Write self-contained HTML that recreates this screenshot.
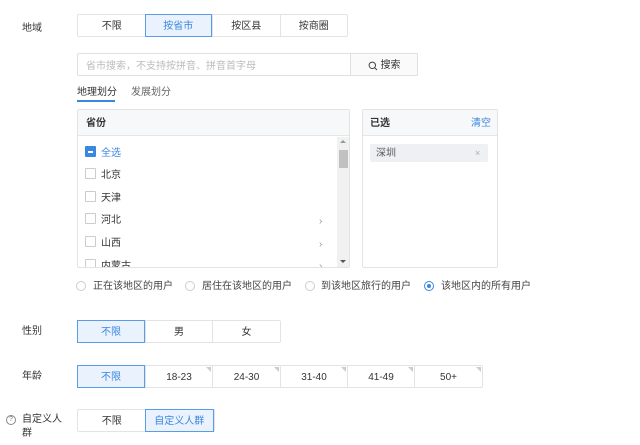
<!DOCTYPE html>
<html><head><meta charset="utf-8"><style>
*{box-sizing:border-box;margin:0;padding:0}
body{width:640px;height:445px;background:#fff;font-family:"Liberation Sans","Noto Sans CJK SC",sans-serif;font-size:10px;line-height:1.2;color:#333;position:relative;overflow:hidden}
.a{position:absolute}
.lbl{position:absolute;left:22px;font-size:10px;color:#333}
.seg{position:absolute;display:flex;border:1px solid #e3e3e3;border-radius:2px}
.seg div{height:100%;display:block;text-align:center;line-height:21px;padding-top:1px;border-left:1px solid #e3e3e3;color:#333;position:relative;overflow:hidden}
.seg div:first-child{border-left:none}
.seg div.on{background:#eaf3fd;border:1px solid #5a9ce8;color:#3b86e0;margin:-1px 0 -1px -1px;height:calc(100% + 2px)}
.seg div.on:first-child{margin-left:-1px}
.tri:after{content:"";position:absolute;right:1px;top:1px;border-top:5px solid #ccc;border-left:5px solid transparent}
.cb{position:absolute;left:85px;width:11px;height:11px;border:1px solid #ccc;border-radius:1px;background:#fff}
.row{position:absolute;left:101px;font-size:10px;color:#333}
.arr{position:absolute;left:319px;color:#999;font-size:10px}
.rad{position:absolute;width:10px;height:10px;border:1px solid #ccc;border-radius:50%;top:281px}
.rt{position:absolute;top:280px;font-size:10px;color:#444}
</style></head><body>
<div class="lbl" style="top:23px">地域</div>
<div class="seg" style="left:77px;top:14px;width:271px;height:23px">
<div style="width:68px">不限</div><div class="on" style="width:68px">按省市</div><div style="width:68px">按区县</div><div style="width:68px">按商圈</div></div>

<div class="a" style="left:77px;top:53px;width:341px;height:23px;border:1px solid #e0e0e0;border-radius:2px"></div>
<div class="a" style="left:86px;top:61px;color:#bbb;font-size:10px">省市搜索，不支持按拼音、拼音首字母</div>
<div class="a" style="left:350px;top:53px;width:68px;height:23px;border:1px solid #e0e0e0;border-radius:0 2px 2px 0;background:#fafafa;display:flex;align-items:center;justify-content:center;font-size:10px;color:#333;padding-top:2px"><svg width="10" height="10" viewBox="0 0 10 10" style="margin-right:3px"><circle cx="4.3" cy="4.3" r="3.2" fill="none" stroke="#444" stroke-width="1"/><path d="M6.6 6.6L9 9" stroke="#444" stroke-width="1"/></svg><span style="padding-top:1px">搜索</span></div>

<div class="a" style="left:77px;top:87px;font-size:10px;color:#333">地理划分</div>
<div class="a" style="left:77px;top:100px;width:38px;height:2px;background:#3b86e0"></div>
<div class="a" style="left:131px;top:87px;font-size:10px;color:#666">发展划分</div>

<div class="a" style="left:77px;top:109px;width:273px;height:159px;border:1px solid #e3e3e3;border-radius:2px"></div>
<div class="a" style="left:78px;top:110px;width:271px;height:26px;background:#f7f8fa;border-bottom:1px solid #e6e6e6"></div>
<div class="a" style="left:86px;top:118px;font-size:10px;color:#333;font-weight:bold">省份</div>
<div class="cb" style="top:146px;background:#3b86e0;border-color:#3b86e0"><div style="position:absolute;left:2px;top:4px;width:5px;height:1.5px;background:#fff"></div></div>
<div class="row" style="top:148px;color:#3b86e0">全选</div>
<div class="cb" style="top:168px"></div><div class="row" style="top:170px">北京</div>
<div class="cb" style="top:191px"></div><div class="row" style="top:193px">天津</div>
<div class="cb" style="top:213px"></div><div class="row" style="top:215px">河北</div><div class="arr" style="top:216px">›</div>
<div class="cb" style="top:236px"></div><div class="row" style="top:238px">山西</div><div class="arr" style="top:239px">›</div>
<div class="a" style="left:78px;top:255px;width:258px;height:12px;overflow:hidden"><div class="cb" style="left:7px;top:4px"></div><div class="row" style="left:23px;top:6px">内蒙古</div><div class="arr" style="left:241px;top:6px">›</div></div>
<div class="a" style="left:337px;top:137px;width:12px;height:130px;background:#f1f1f1"></div>
<div class="a" style="left:339px;top:150px;width:9px;height:18px;background:#c1c1c1"></div>
<div class="a" style="left:340px;top:140px;border-bottom:3px solid #999;border-left:3px solid transparent;border-right:3px solid transparent"></div>
<div class="a" style="left:340px;top:260px;border-top:3px solid #555;border-left:3px solid transparent;border-right:3px solid transparent"></div>

<div class="a" style="left:362px;top:109px;width:136px;height:159px;border:1px solid #e3e3e3;border-radius:2px"></div>
<div class="a" style="left:363px;top:110px;width:134px;height:26px;background:#f7f8fa;border-bottom:1px solid #e6e6e6"></div>
<div class="a" style="left:370px;top:118px;font-size:10px;color:#333;font-weight:bold">已选</div>
<div class="a" style="left:471px;top:118px;font-size:10px;color:#3b86e0">清空</div>
<div class="a" style="left:370px;top:144px;width:118px;height:18px;background:#eef0f3;border-radius:2px"></div>
<div class="a" style="left:376px;top:148px;font-size:10px;color:#555">深圳</div>
<div class="a" style="left:475px;top:148px;font-size:9px;color:#aaa">×</div>

<div class="rad" style="left:76px"></div><div class="rt" style="left:93px;top:281px">正在该地区的用户</div>
<div class="rad" style="left:185px"></div><div class="rt" style="left:202px;top:281px">居住在该地区的用户</div>
<div class="rad" style="left:305px"></div><div class="rt" style="left:321px;top:281px">到该地区旅行的用户</div>
<div class="rad" style="left:424px;border-color:#3b86e0"><div style="position:absolute;left:2px;top:2px;width:4px;height:4px;border-radius:50%;background:#3b86e0"></div></div><div class="rt" style="left:441px;top:281px">该地区内的所有用户</div>

<div class="lbl" style="top:326px">性别</div>
<div class="seg" style="left:77px;top:320px;width:204px;height:23px">
<div class="on" style="width:68px">不限</div><div style="width:67px">男</div><div style="width:68px">女</div></div>

<div class="lbl" style="top:371px">年龄</div>
<div class="seg" style="left:77px;top:365px;width:406px;height:23px">
<div class="on" style="width:68px">不限</div><div class="tri" style="width:67px">18-23</div><div class="tri" style="width:68px">24-30</div><div class="tri" style="width:67px">31-40</div><div class="tri" style="width:67px">41-49</div><div class="tri" style="width:68px">50+</div></div>

<div class="a" style="left:6px;top:415px;width:10px;height:10px;border:1px solid #888;border-radius:50%;font-size:7px;line-height:8px;text-align:center;color:#777">?</div>
<div class="lbl" style="top:413px;line-height:14px">自定义人<br>群</div>
<div class="seg" style="left:77px;top:409px;width:138px;height:23px">
<div style="width:68px">不限</div><div class="on" style="width:70px">自定义人群</div></div>
</body></html>
